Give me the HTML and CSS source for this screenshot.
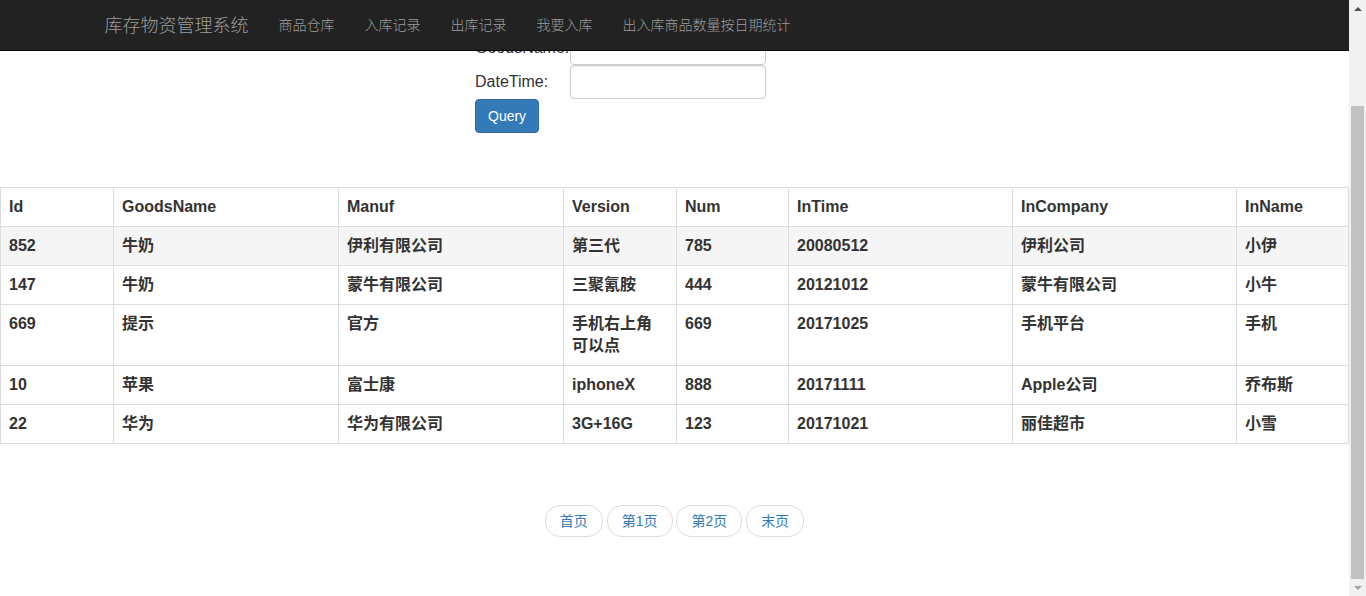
FILE: index.html
```html
<!DOCTYPE html>
<html lang="zh-CN">
<head>
<meta charset="utf-8">
<title>库存物资管理系统</title>
<link rel="stylesheet" href="styles.css">
</head>
<body>
<nav class="navbar">
  <div class="container">
    <a class="brand" href="#">库存物资管理系统</a>
    <ul class="nav">
      <li><a href="#">商品仓库</a></li>
      <li><a href="#">入库记录</a></li>
      <li><a href="#">出库记录</a></li>
      <li><a href="#">我要入库</a></li>
      <li><a href="#">出入库商品数量按日期统计</a></li>
    </ul>
  </div>
</nav>
<main class="main">
  <form class="query-form">
    <div class="form-row">
      <label class="form-label">GoodsName:</label>
      <input class="form-input" type="text">
    </div>
    <div class="form-row">
      <label class="form-label">DateTime:</label>
      <input class="form-input" type="text">
    </div>
    <div class="form-row">
      <button class="btn" type="button">Query</button>
    </div>
  </form>
  <table class="data-table">
    <colgroup>
      <col class="w113"><col class="w225"><col class="w225"><col class="w113"><col class="w112"><col class="w224"><col class="w224"><col class="w112">
    </colgroup>
    <thead>
      <tr><th>Id</th><th>GoodsName</th><th>Manuf</th><th>Version</th><th>Num</th><th>InTime</th><th>InCompany</th><th>InName</th></tr>
    </thead>
    <tbody>
      <tr class="hover"><td>852</td><td>牛奶</td><td>伊利有限公司</td><td>第三代</td><td>785</td><td>20080512</td><td>伊利公司</td><td>小伊</td></tr>
      <tr><td>147</td><td>牛奶</td><td>蒙牛有限公司</td><td>三聚氰胺</td><td>444</td><td>20121012</td><td>蒙牛有限公司</td><td>小牛</td></tr>
      <tr><td>669</td><td>提示</td><td>官方</td><td>手机右上角可以点</td><td>669</td><td>20171025</td><td>手机平台</td><td>手机</td></tr>
      <tr><td>10</td><td>苹果</td><td>富士康</td><td>iphoneX</td><td>888</td><td>20171111</td><td>Apple公司</td><td>乔布斯</td></tr>
      <tr><td>22</td><td>华为</td><td>华为有限公司</td><td>3G+16G</td><td>123</td><td>20171021</td><td>丽佳超市</td><td>小雪</td></tr>
    </tbody>
  </table>
  <ul class="pager">
    <li><a href="#">首页</a></li>
    <li><a href="#">第1页</a></li>
    <li><a href="#">第2页</a></li>
    <li><a href="#">末页</a></li>
  </ul>
</main>
<div class="scrollbar" aria-hidden="true">
  <span class="sb-btn"><span class="arrow-up"></span></span>
  <div class="sb-track"><div class="sb-thumb"></div></div>
  <span class="sb-btn"><span class="arrow-down"></span></span>
</div>
</body>
</html>
```
FILE: styles.css
```css
* { box-sizing: border-box; }
html, body { margin: 0; padding: 0; }
body {
  font-family: "Liberation Sans", Arial, "Noto Sans CJK SC", sans-serif;
  font-size: 14px;
  line-height: 20px;
  color: #333;
  background: #fff;
  padding-right: 17px;
  overflow: hidden;
}
.navbar {
  position: fixed;
  top: 0; left: 0; right: 17px;
  z-index: 10;
  background: #222;
  border-bottom: 1px solid #080808;
  height: 51px;
}
.container {
  width: 1170px;
  margin: 0 auto;
  padding: 0 15px;
  display: flex;
  align-items: flex-start;
}
.brand {
  display: block;
  font-size: 18px;
  line-height: 20px;
  padding: 14px 15px 16px;
  margin-left: -15px;
  color: #9d9d9d;
  text-decoration: none;
  font-family: "Noto Sans CJK SC", sans-serif;
  font-weight: 300;
}
.nav {
  list-style: none;
  margin: 0;
  padding: 0;
  display: flex;
}
.nav a {
  display: block;
  padding: 14px 15px 16px;
  line-height: 20px;
  color: #9d9d9d;
  text-decoration: none;
  font-family: "Noto Sans CJK SC", sans-serif;
  font-weight: 300;
}
.main {
  padding-top: 31px;
  padding-bottom: 40px;
}
.query-form {
  margin-left: 475px;
}
.form-row {
  display: flex;
  height: 34px;
  align-items: center;
}
.form-label {
  width: 95px;
  font-size: 16px;
}
.form-input {
  width: 196px;
  height: 34px;
  border: 1px solid #ccc;
  border-radius: 4px;
  box-shadow: inset 0 1px 1px rgba(0,0,0,.075);
  padding: 6px 12px;
  font-size: 14px;
}
.btn {
  height: 34px;
  padding: 6px 12px;
  font-family: inherit;
  font-size: 14px;
  line-height: 20px;
  color: #fff;
  background: #337ab7;
  border: 1px solid #2e6da4;
  border-radius: 4px;
}
.data-table {
  margin-top: 54px;
  width: 1348px;
  border-collapse: collapse;
  table-layout: fixed;
  font-size: 16px;
  font-weight: bold;
}
.w112 { width: 112px; }
.w113 { width: 113px; }
.w224 { width: 224px; }
.w225 { width: 225px; }
.data-table th, .data-table td {
  border: 1px solid #ddd;
  padding: 8px 10px 8px 8px;
  line-height: 22px;
  text-align: left;
  vertical-align: top;
}
.data-table tr.hover td { background: #f5f5f5; }
.pager {
  list-style: none;
  margin: 61px 0 0;
  padding: 0;
  text-align: center;
}
.pager li { display: inline; }
.pager a {
  display: inline-block;
  padding: 5px 14px;
  line-height: 20px;
  border: 1px solid #ddd;
  border-radius: 15px;
  color: #337ab7;
  text-decoration: none;
  background: #fff;
}
.scrollbar {
  position: fixed;
  top: 0; right: 0; bottom: 0;
  width: 17px;
  background: #f1f1f1;
  display: flex;
  flex-direction: column;
  z-index: 20;
}
.sb-btn {
  height: 17px;
  flex: none;
  display: flex;
  align-items: center;
  justify-content: center;
}
.arrow-up {
  width: 0; height: 0;
  border-left: 4px solid transparent;
  border-right: 4px solid transparent;
  border-bottom: 4px solid #505050;
}
.arrow-down {
  width: 0; height: 0;
  border-left: 4px solid transparent;
  border-right: 4px solid transparent;
  border-top: 4px solid #a3a3a3;
}
.sb-track {
  flex: 1;
  padding-top: 89px;
}
.sb-thumb {
  height: 473px;
  margin: 0 2px;
  background: #c1c1c1;
}
```
